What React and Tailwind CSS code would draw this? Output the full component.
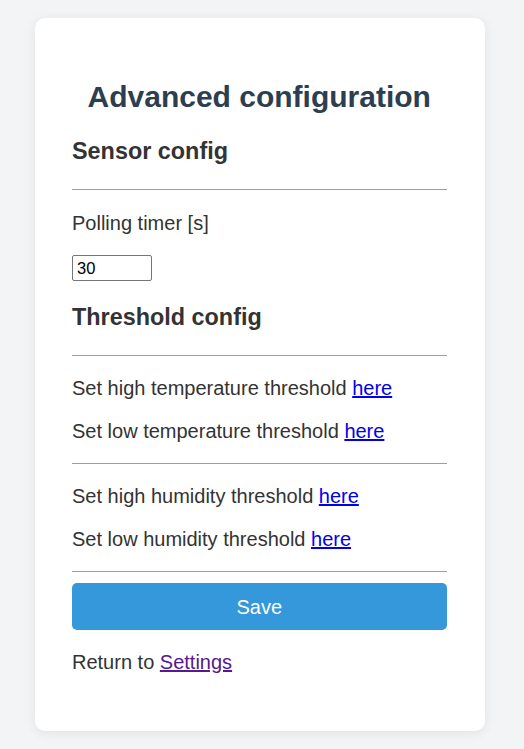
export default function App() {
  const font = { fontFamily: '"Liberation Sans", Arial, sans-serif' };
  const p = "text-[20px] leading-[23px] text-[#333]";
  const link = "text-[#0000ee] underline";
  return (
    <div className="min-h-[749px] w-[524px] bg-[#f3f4f6] pt-[18px] pb-[18px]" style={font}>
      <div className="ml-[35px] w-[450px] h-[713px] rounded-[10px] bg-white pl-[37px] pr-[38.5px] pt-[62px] shadow-[0_2px_12px_rgba(0,0,0,0.08)]">
        <h1 className="text-center text-[30px] leading-[34px] font-bold text-[#2c3e50]">
          Advanced configuration
        </h1>
        <h3 className="mt-[24px] text-[23.4px] leading-[27px] font-bold text-[#333]">Sensor config</h3>
        <div className="mt-[24px] h-px bg-[#9e9e9e]" />
        <p className={`mt-[22px] ${p}`}>Polling timer [s]</p>
        <input
          type="text"
          defaultValue="30"
          className="mt-[20px] block h-[26px] w-[80px] rounded-[2px] border border-[#767676] px-[4px] text-[16.5px] text-black"
          style={font}
        />
        <h3 className="mt-[23px] text-[23.4px] leading-[27px] font-bold text-[#333]">Threshold config</h3>
        <div className="mt-[24px] h-px bg-[#9e9e9e]" />
        <p className={`mt-[21px] ${p}`}>
          Set high temperature threshold <a href="#" className={link}>here</a>
        </p>
        <p className={`mt-[20px] ${p}`}>
          Set low temperature threshold <a href="#" className={link}>here</a>
        </p>
        <div className="mt-[20px] h-px bg-[#9e9e9e]" />
        <p className={`mt-[21px] ${p}`}>
          Set high humidity threshold <a href="#" className={link}>here</a>
        </p>
        <p className={`mt-[20px] ${p}`}>
          Set low humidity threshold <a href="#" className={link}>here</a>
        </p>
        <div className="mt-[20px] h-px bg-[#9e9e9e]" />
        <button className="mt-[11px] flex h-[47px] w-full items-center justify-center rounded-[5px] bg-[#3498db] text-[20px] text-white" style={font}>
          Save
        </button>
        <p className={`mt-[21px] ${p}`}>
          Return to <a href="#" className="text-[#551a8b] underline">Settings</a>
        </p>
      </div>
    </div>
  );
}
